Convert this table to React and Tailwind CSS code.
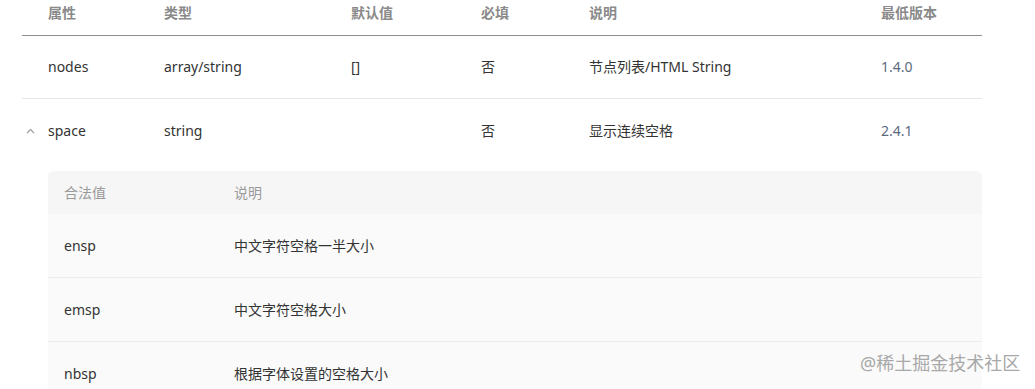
import React from "react";

const props = [
  { name: "nodes", type: "array/string", def: "[]", required: "否", desc: "节点列表/HTML String", version: "1.4.0" },
  { name: "space", type: "string", def: "", required: "否", desc: "显示连续空格", version: "2.4.1", expanded: true },
];

const spaceValues = [
  { value: "ensp", desc: "中文字符空格一半大小" },
  { value: "emsp", desc: "中文字符空格大小" },
  { value: "nbsp", desc: "根据字体设置的空格大小" },
];

const cols = "grid grid-cols-[142px_187px_130px_108px_292px_1fr]";

function Chevron() {
  return (
    <svg width="9" height="6" viewBox="0 0 9 6" fill="none" className="text-[#9a9a9a]">
      <path d="M1 5 L4.5 1.5 L8 5" stroke="currentColor" strokeWidth="1.1" />
    </svg>
  );
}

export default function App() {
  return (
    <div
      className="relative h-[389px] w-[1035px] overflow-hidden bg-white pl-[22px]"
      style={{ fontFamily: '"Noto Sans", "Noto Sans CJK SC", sans-serif' }}
    >
      <div className="w-[960px]">
        {/* 表头 */}
        <div className={`${cols} h-[36px] border-b border-[#8e8e8e] pt-[3px] text-[14px] font-bold leading-[20px] text-[#8a8a8a]`}>
          <div className="pl-[26px]">属性</div>
          <div>类型</div>
          <div>默认值</div>
          <div>必填</div>
          <div>说明</div>
          <div>最低版本</div>
        </div>

        {props.map((p, i) => (
          <div key={p.name}>
            <div
              className={`${cols} h-[63px] items-center text-[14px] leading-[20px] text-[#333] ${
                i < props.length - 1 ? "border-b border-[#e6e6e6]" : ""
              }`}
            >
              <div className="flex items-center">
                <div className="flex w-[26px] justify-start pl-[4px]">{p.expanded && <Chevron />}</div>
                {p.name}
              </div>
              <div>{p.type}</div>
              <div>{p.def}</div>
              <div>{p.required}</div>
              <div>{p.desc}</div>
              <div className="text-[#5c6b7f]">{p.version}</div>
            </div>

            {p.expanded && (
              <div className="ml-[26px] mt-[9px] overflow-hidden rounded-t-[6px] bg-[#fafafa] text-[14px] leading-[20px]">
                <div className="grid h-[43px] grid-cols-[186px_1fr] items-center bg-[#f6f6f6] text-[#9a9a9a]">
                  <div className="pl-[16px]">合法值</div>
                  <div>说明</div>
                </div>
                {spaceValues.map((v) => (
                  <div
                    key={v.value}
                    className="grid h-[64px] grid-cols-[186px_1fr] items-center border-b border-[#ececec] text-[#333]"
                  >
                    <div className="pl-[16px]">{v.value}</div>
                    <div>{v.desc}</div>
                  </div>
                ))}
              </div>
            )}
          </div>
        ))}
      </div>

      {/* 水印 */}
      <div className="absolute left-[860px] top-[351px] text-[18px] leading-[24px] text-[#a8a8a8]">
        @稀土掘金技术社区
      </div>
    </div>
  );
}
